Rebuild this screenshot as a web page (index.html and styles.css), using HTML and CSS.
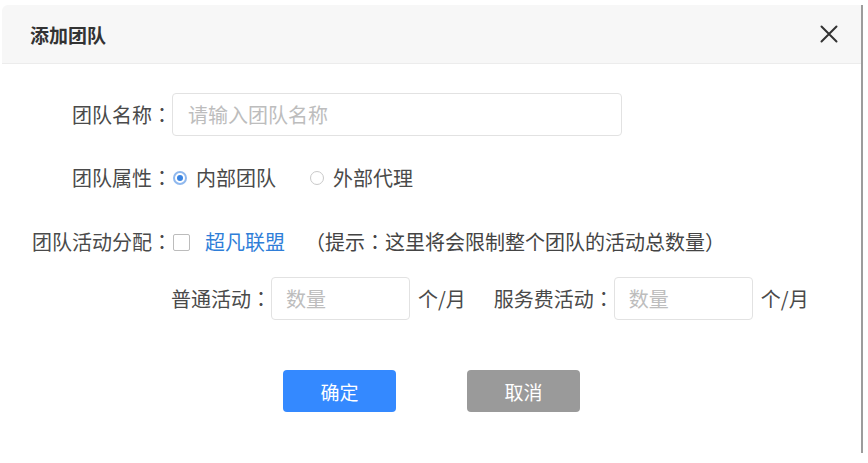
FILE: index.html
```html
<!DOCTYPE html>
<html lang="zh-CN">
<head>
<meta charset="utf-8">
<title>添加团队</title>
<link rel="stylesheet" href="styles.css">
</head>
<body>
<div class="dialog">
  <div class="dialog-header">
    <span class="dialog-title">添加团队</span>
    <span class="close" aria-label="关闭">
      <svg width="18" height="18" viewBox="0 0 18 18"><path d="M1.5 1.5 L16.5 16.5 M16.5 1.5 L1.5 16.5" stroke="#333" stroke-width="2" fill="none" stroke-linecap="round"/></svg>
    </span>
  </div>
  <div class="dialog-body">
    <div class="row row-name">
      <span class="label">团队名称<span class="punct" lang="zh-TW">：</span></span>
      <input class="input input-wide" type="text" placeholder="请输入团队名称">
    </div>
    <div class="row row-type">
      <span class="label">团队属性<span class="punct" lang="zh-TW">：</span></span>
      <span class="radio checked"></span>
      <span class="option-text">内部团队</span>
      <span class="radio second"></span>
      <span class="option-text">外部代理</span>
    </div>
    <div class="row row-alloc">
      <span class="label">团队活动分配<span class="punct" lang="zh-TW">：</span></span>
      <span class="checkbox"></span>
      <span class="link">超凡联盟</span>
      <span class="tip"><span class="punct" lang="zh-TW">（</span>提示<span class="punct" lang="zh-TW">：</span>这里将会限制整个团队的活动总数量<span class="punct" lang="zh-TW">）</span></span>
    </div>
    <div class="row row-counts">
      <span class="sublabel">普通活动<span class="punct" lang="zh-TW">：</span></span>
      <input class="input input-num" type="text" placeholder="数量">
      <span class="unit">个/月</span>
      <span class="sublabel second-label">服务费活动<span class="punct" lang="zh-TW">：</span></span>
      <input class="input input-num" type="text" placeholder="数量">
      <span class="unit">个/月</span>
    </div>
    <div class="actions">
      <button class="btn btn-primary" type="button">确定</button>
      <button class="btn btn-cancel" type="button">取消</button>
    </div>
  </div>
</div>
</body>
</html>
```
FILE: styles.css
```css
* { box-sizing: border-box; }
html, body { margin: 0; padding: 0; background: #fff; }
body {
  font-family: "Noto Sans CJK SC", "Noto Sans", sans-serif;
  font-size: 20px;
  color: #4a4a4a;
}
.punct { font-family: "Noto Sans CJK TC", "Noto Sans CJK SC", sans-serif; }
.dialog {
  margin: 5px 0 0 2px;
  width: 861px;
  height: 448px;
  border-right: 2px solid #9c9c9c;
  border-top-left-radius: 6px;
  background: #fff;
}
.dialog-header {
  height: 59px;
  background: #f7f7f7;
  border-bottom: 1px solid #ececec;
  border-top-left-radius: 6px;
  display: flex;
  align-items: center;
  justify-content: space-between;
  padding: 0 23px 0 28px;
}
.dialog-title {
  font-size: 19px;
  font-weight: bold;
  color: #333;
  line-height: 1;
}
.close { display: flex; align-items: center; }
.dialog-body { padding-top: 29px; }
.row {
  display: flex;
  align-items: center;
  line-height: 1;
  white-space: nowrap;
}
.label {
  width: 170px;
  text-align: right;
  flex-shrink: 0;
}
.row-name { height: 43px; }
.row-type { height: 30px; margin-top: 27px; }
.row-alloc { height: 30px; margin-top: 34px; }
.row-counts { height: 43px; margin-top: 20px; padding-left: 169px; }
.input {
  height: 43px;
  border: 1px solid #e2e2e2;
  border-radius: 4px;
  font-family: inherit;
  font-size: 20px;
  color: #333;
  outline: none;
  background: #fff;
}
.input::placeholder { color: #bdbdbd; }
.input-wide { width: 450px; padding: 0 15px; }
.input-num { width: 139px; padding: 0 14px; }
.radio {
  width: 14px;
  height: 14px;
  border-radius: 50%;
  border: 1px solid #c9c9c9;
  display: inline-flex;
  align-items: center;
  justify-content: center;
  margin-left: 1px;
}
.radio.checked { border: 2px solid #8fb8ee; }
.radio.checked::after {
  content: "";
  width: 6px;
  height: 6px;
  border-radius: 50%;
  background: #3a84e2;
}
.radio.second { margin-left: 34px; }
.option-text { margin-left: 9px; }
.checkbox {
  width: 17px;
  height: 17px;
  border: 1px solid #bcbcbc;
  border-radius: 2px;
  margin-left: 1px;
  background: #fff;
}
.link { color: #2f7ed8; margin-left: 15px; }
.tip { margin-left: 20px; color: #444; }
.unit { margin-left: 8px; }
.second-label { margin-left: 28px; }
.actions {
  margin-top: 50px;
  display: flex;
  justify-content: center;
  gap: 71px;
}
.btn {
  width: 113px;
  height: 42px;
  border: none;
  border-radius: 4px;
  font-family: inherit;
  font-size: 19px;
  color: #fff;
  cursor: pointer;
}
.btn-primary { background: #3489ff; }
.btn-cancel { background: #9a9a9a; }
```
